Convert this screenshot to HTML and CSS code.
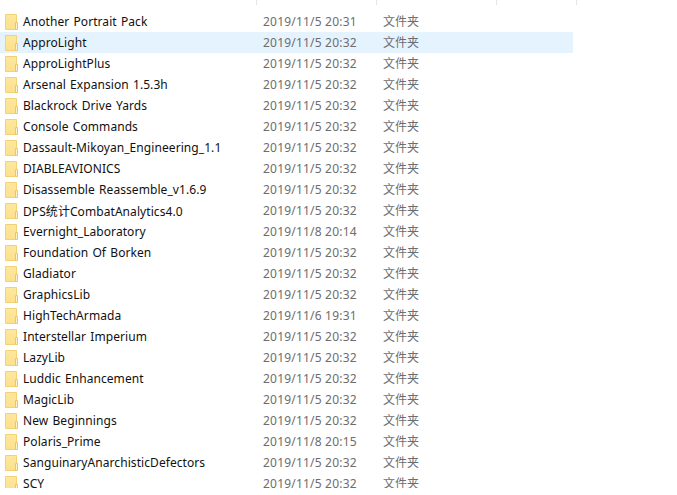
FILE: index.html
```html
<!DOCTYPE html>
<html lang="zh-CN">
<head>
<meta charset="utf-8">
<title>文件夹</title>
<link rel="stylesheet" href="styles.css">
</head>
<body>
<svg class="defs" width="0" height="0" aria-hidden="true"><defs>
<linearGradient id="fg" x1="0" y1="0" x2="0" y2="1"><stop offset="0" stop-color="#fde89f"/><stop offset="1" stop-color="#fde08a"/></linearGradient>
<symbol id="folder" viewBox="0 0 13 16">
<path d="M0.5 0.5H11.5V15.5H0.5Z" fill="url(#fg)" stroke="#f3d277"/>
<path d="M10.5 8.5H12.5V15.5H10.5Z" fill="#fef3c8" stroke="#ecc760"/>
</symbol>
</defs></svg>
<div class="header"><span class="col c1"></span><span class="col c2"></span><span class="col c3"></span><span class="col c4"></span></div>
<main class="list">
<div class="row"><svg class="ico"><use href="#folder"/></svg><span class="name">Another Portrait Pack</span><span class="date">2019/11/5 20:31</span><span class="type">文件夹</span></div>
<div class="row hover"><svg class="ico"><use href="#folder"/></svg><span class="name">ApproLight</span><span class="date">2019/11/5 20:32</span><span class="type">文件夹</span></div>
<div class="row"><svg class="ico"><use href="#folder"/></svg><span class="name">ApproLightPlus</span><span class="date">2019/11/5 20:32</span><span class="type">文件夹</span></div>
<div class="row"><svg class="ico"><use href="#folder"/></svg><span class="name">Arsenal Expansion 1.5.3h</span><span class="date">2019/11/5 20:32</span><span class="type">文件夹</span></div>
<div class="row"><svg class="ico"><use href="#folder"/></svg><span class="name">Blackrock Drive Yards</span><span class="date">2019/11/5 20:32</span><span class="type">文件夹</span></div>
<div class="row"><svg class="ico"><use href="#folder"/></svg><span class="name">Console Commands</span><span class="date">2019/11/5 20:32</span><span class="type">文件夹</span></div>
<div class="row"><svg class="ico"><use href="#folder"/></svg><span class="name">Dassault-Mikoyan_Engineering_1.1</span><span class="date">2019/11/5 20:32</span><span class="type">文件夹</span></div>
<div class="row"><svg class="ico"><use href="#folder"/></svg><span class="name">DIABLEAVIONICS</span><span class="date">2019/11/5 20:32</span><span class="type">文件夹</span></div>
<div class="row"><svg class="ico"><use href="#folder"/></svg><span class="name">Disassemble Reassemble_v1.6.9</span><span class="date">2019/11/5 20:32</span><span class="type">文件夹</span></div>
<div class="row"><svg class="ico"><use href="#folder"/></svg><span class="name">DPS统计CombatAnalytics4.0</span><span class="date">2019/11/5 20:32</span><span class="type">文件夹</span></div>
<div class="row"><svg class="ico"><use href="#folder"/></svg><span class="name">Evernight_Laboratory</span><span class="date">2019/11/8 20:14</span><span class="type">文件夹</span></div>
<div class="row"><svg class="ico"><use href="#folder"/></svg><span class="name">Foundation Of Borken</span><span class="date">2019/11/5 20:32</span><span class="type">文件夹</span></div>
<div class="row"><svg class="ico"><use href="#folder"/></svg><span class="name">Gladiator</span><span class="date">2019/11/5 20:32</span><span class="type">文件夹</span></div>
<div class="row"><svg class="ico"><use href="#folder"/></svg><span class="name">GraphicsLib</span><span class="date">2019/11/5 20:32</span><span class="type">文件夹</span></div>
<div class="row"><svg class="ico"><use href="#folder"/></svg><span class="name">HighTechArmada</span><span class="date">2019/11/6 19:31</span><span class="type">文件夹</span></div>
<div class="row"><svg class="ico"><use href="#folder"/></svg><span class="name">Interstellar Imperium</span><span class="date">2019/11/5 20:32</span><span class="type">文件夹</span></div>
<div class="row"><svg class="ico"><use href="#folder"/></svg><span class="name">LazyLib</span><span class="date">2019/11/5 20:32</span><span class="type">文件夹</span></div>
<div class="row"><svg class="ico"><use href="#folder"/></svg><span class="name">Luddic Enhancement</span><span class="date">2019/11/5 20:32</span><span class="type">文件夹</span></div>
<div class="row"><svg class="ico"><use href="#folder"/></svg><span class="name">MagicLib</span><span class="date">2019/11/5 20:32</span><span class="type">文件夹</span></div>
<div class="row"><svg class="ico"><use href="#folder"/></svg><span class="name">New Beginnings</span><span class="date">2019/11/5 20:32</span><span class="type">文件夹</span></div>
<div class="row"><svg class="ico"><use href="#folder"/></svg><span class="name">Polaris_Prime</span><span class="date">2019/11/8 20:15</span><span class="type">文件夹</span></div>
<div class="row"><svg class="ico"><use href="#folder"/></svg><span class="name">SanguinaryAnarchisticDefectors</span><span class="date">2019/11/5 20:32</span><span class="type">文件夹</span></div>
<div class="row"><svg class="ico"><use href="#folder"/></svg><span class="name">SCY</span><span class="date">2019/11/5 20:32</span><span class="type">文件夹</span></div>
</main>
</body>
</html>
```
FILE: styles.css
```css
html, body { margin: 0; padding: 0; background: #fff; }
body { width: 677px; height: 495px; overflow: hidden; font-family: "Noto Sans", "Noto Sans CJK SC", sans-serif; font-size: 12px; }
.defs { position: absolute; }
.header { display: flex; height: 5px; width: 577px; }
.col { border-right: 1px solid #e5e5e5; box-sizing: border-box; }
.c1 { width: 257px; }
.c2 { width: 120px; }
.c3 { width: 120px; }
.c4 { width: 80px; }
.list { height: 477px; overflow: hidden; width: 573px; margin-top: 6px; }
.row { display: flex; align-items: center; height: 21px; }
.row.hover { background: #e5f3ff; }
.ico { width: 13px; height: 16px; margin-left: 5px; flex: none; }
.name { width: 240px; margin-left: 5px; color: #111; white-space: nowrap; flex: none; letter-spacing: 0.07px; word-spacing: 1px; }
.date { width: 120px; color: #6d6d6d; white-space: nowrap; flex: none; letter-spacing: 0.2px; }
.type { color: #6d6d6d; white-space: nowrap; line-height: 18px; }
```
